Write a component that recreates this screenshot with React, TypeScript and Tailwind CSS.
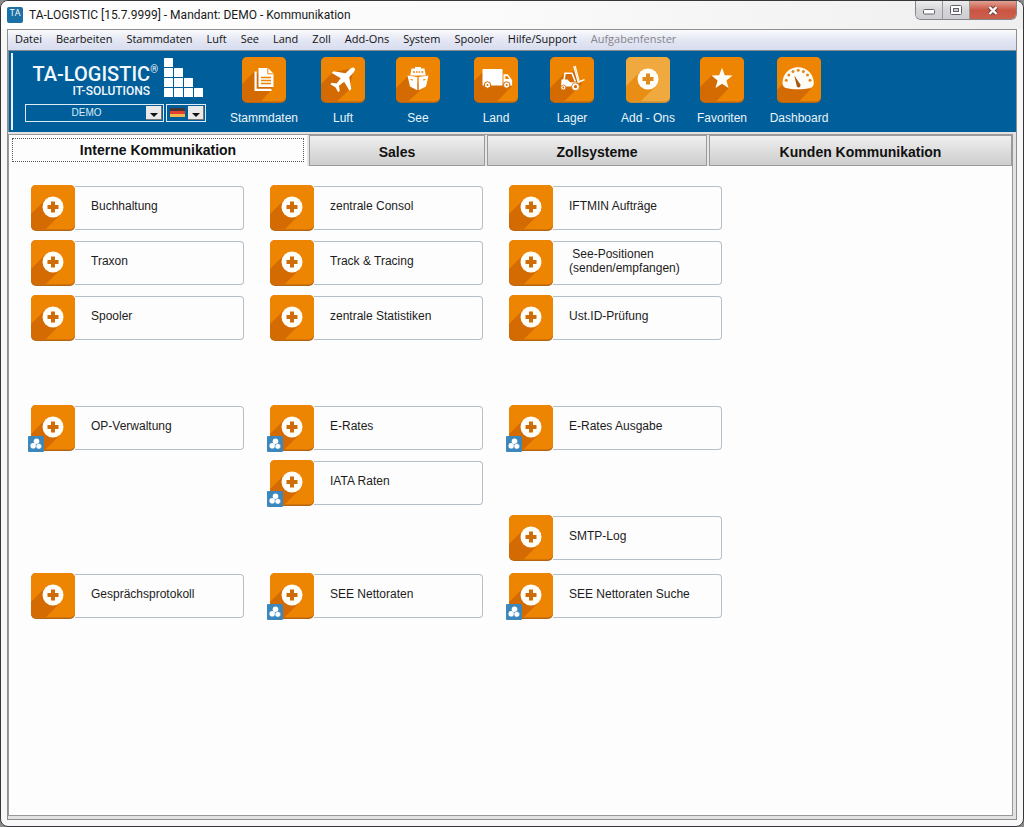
import { useState } from "react";
import type { ReactNode } from "react";
import clsx from "clsx";

type Tile = { label: string; linked?: boolean };

const MENU = [
  "Datei",
  "Bearbeiten",
  "Stammdaten",
  "Luft",
  "See",
  "Land",
  "Zoll",
  "Add-Ons",
  "System",
  "Spooler",
  "Hilfe/Support",
];

const TABS = [
  { label: "Interne Kommunikation", width: "w-[298px]" },
  { label: "Sales", width: "w-[176px]" },
  { label: "Zollsysteme", width: "w-[220px]" },
  { label: "Kunden Kommunikation", width: "flex-1" },
];

// null leaves the cell of the grid empty
const GROUPS: Array<Array<Tile | null>> = [
  [
    { label: "Buchhaltung" },
    { label: "zentrale Consol" },
    { label: "IFTMIN Aufträge" },
    { label: "Traxon" },
    { label: "Track & Tracing" },
    { label: " See-Positionen\n(senden/empfangen)" },
    { label: "Spooler" },
    { label: "zentrale Statistiken" },
    { label: "Ust.ID-Prüfung" },
  ],
  [
    { label: "OP-Verwaltung", linked: true },
    { label: "E-Rates", linked: true },
    { label: "E-Rates Ausgabe", linked: true },
    null,
    { label: "IATA Raten", linked: true },
    null,
    null,
    null,
    { label: "SMTP-Log" },
  ],
  [
    { label: "Gesprächsprotokoll" },
    { label: "SEE Nettoraten", linked: true },
    { label: "SEE Nettoraten Suche", linked: true },
  ],
];

/** Orange square with the long shadow that falls to the lower left. */
function IconTile({ light, shadow, children }: { light?: boolean; shadow: string; children: ReactNode }) {
  return (
    <svg viewBox="0 0 44 46" className="block h-[46px] w-11 shrink-0" aria-hidden="true">
      <rect width="44" height="46" rx="5" fill={light ? "#c98a35" : "#b5650f"} />
      <rect width="44" height="44.5" rx="5" fill={light ? "#efa93f" : "#ee8502"} />
      <path d={shadow} fill={light ? "#e88e14" : "#d36b02"} />
      {children}
    </svg>
  );
}

function PlusIcon({ light }: { light?: boolean }) {
  return (
    <IconTile light={light} shadow="M14.5 14.5 0 29V40Q0 44.5 5 44.5H14.5L29.5 29.5Z">
      <circle cx="22" cy="22" r="10.5" fill="#fffdf8" />
      <path d="M20 16.5h4V20h3.5v4H24v3.5h-4V24h-3.5v-4H20z" fill={light ? "#e08a1c" : "#cf6c0a"} />
    </IconTile>
  );
}

function DocumentIcon() {
  return (
    <IconTile shadow="M13 14 0 27V40Q0 44.5 5 44.5H19L31 31Z">
      <path d="M12.5 14.5h2.2v17.3h14.8V34h-17z" fill="#fff" />
      <path d="M16.5 11h9.5l5.5 5.5V30h-15z" fill="#fff" />
      <path d="M25.8 11v5.8h5.7" fill="none" stroke="#ee8502" strokeWidth="1" />
      <path d="M19 20.5h10M19 23.5h10M19 26.5h10" stroke="#ee8502" strokeWidth="1.3" />
    </IconTile>
  );
}

function PlaneIcon() {
  return (
    <IconTile shadow="M12 15 0 27V40Q0 44.5 5 44.5H16L28 33 33 11Z">
      <path
        transform="translate(22.5 22) rotate(-45)"
        d="M15.5 0C15.5-1.8 13-2.6 11-2.6L5.5-2.6-1.5-12.5-4-12.5-1.5-2.4-8-1.7-11-5.6-13-5.6-11.5 0-13 5.6-11 5.6-8 1.7-1.5 2.4-4 12.5-1.5 12.5 5.5 2.6 11 2.6C13 2.6 15.5 1.8 15.5 0Z"
        fill="#fff"
      />
    </IconTile>
  );
}

function ShipIcon() {
  return (
    <IconTile shadow="M12 19 0 31V40Q0 44.5 5 44.5H12L28 30Z">
      <path d="M19 10h6v1.5h3.5l1.3 7H14.2l1.3-7H19z" fill="#fff" />
      <path d="M17 15h2M20 15h1.6M22.6 15h1.6M25.4 15h2" stroke="#ee8502" strokeWidth="1.6" />
      <path d="M11.5 18.5 21.3 20v13.3L14 29.5ZM32.5 18.5 22.7 20v13.3L30 29.5Z" fill="#fff" />
      <path d="M14.5 22.5 17 23M29.5 22.5 27 23" stroke="#ee8502" strokeWidth="1" />
    </IconTile>
  );
}

function TruckIcon() {
  return (
    <IconTile shadow="M9 15 0 24V40Q0 44.5 5 44.5H23L38 29Z">
      <path d="M9.5 12h18q1 0 1 1v15.5h-20V13q0-1 1-1Z" fill="#fff" />
      <path d="M29.5 17.2h4.2l3.4 4.6 1 1.2v5.5h-8.6z" fill="#fff" />
      <path d="M31.3 19h2l2 3h-4z" fill="#ee8502" />
      <circle cx="13.5" cy="28" r="3.2" fill="#fff" stroke="#d36b02" strokeWidth="1" />
      <circle cx="32.7" cy="28" r="3.2" fill="#fff" stroke="#d36b02" strokeWidth="1" />
      <circle cx="13.5" cy="28" r="1" fill="#d36b02" />
      <circle cx="32.7" cy="28" r="1" fill="#d36b02" />
    </IconTile>
  );
}

function ForkliftIcon() {
  return (
    <IconTile shadow="M14 17 0 31V40Q0 44.5 5 44.5H14L32 27 24 14Z">
      <path d="M14 23.5 15 16.3h7l3.3 8.2" fill="none" stroke="#fff" strokeWidth="1.6" />
      <path d="M11.5 22.5h6l2.5 2.7h6.5v4.3H11z" fill="#fff" />
      <path d="M23.7 9 28.3 26M25.2 9 29.5 25.5" stroke="#fff" strokeWidth="1.1" />
      <path d="M28.5 25 34.5 22.7" stroke="#fff" strokeWidth="1.4" />
      <circle cx="13.3" cy="30.5" r="2.5" fill="#fff" stroke="#d36b02" strokeWidth="0.8" />
      <circle cx="25.5" cy="29.7" r="3.9" fill="#fff" stroke="#d36b02" strokeWidth="0.8" />
      <circle cx="13.3" cy="30.5" r="0.9" fill="#d36b02" />
      <circle cx="25.5" cy="29.7" r="1.6" fill="#d36b02" />
    </IconTile>
  );
}

function StarIcon() {
  return (
    <IconTile shadow="M12 18 0 30V40Q0 44.5 5 44.5H16L29 31Z">
      <path
        d="M22 10.8 24.8 18.3 32.6 18.6 26.4 23.5 28.5 31 22 26.7 15.5 31 17.6 23.5 11.4 18.6 19.2 18.3Z"
        fill="#fffdf8"
      />
    </IconTile>
  );
}

function GaugeIcon() {
  return (
    <IconTile shadow="M6 27 0 33V40Q0 44.5 5 44.5H22L34 32Z">
      <path d="M5.5 26C5.5 17 12.5 10.3 21 10.3S36.8 17 36.8 26C36.8 29 35 30.5 33 31 27 32.8 15 32.8 9 31 7 30.4 5.5 29 5.5 26Z" fill="#fffdf8" />
      <g fill="#e08a1c">
        <circle cx="9.3" cy="23.3" r="1.5" />
        <circle cx="11.8" cy="18" r="1.5" />
        <circle cx="16" cy="14.6" r="1.5" />
        <circle cx="21.2" cy="13.3" r="1.5" />
        <circle cx="26.4" cy="14.6" r="1.5" />
        <circle cx="30.5" cy="18" r="1.5" />
        <circle cx="33" cy="23.3" r="1.5" />
      </g>
      <path d="M17.3 18.5 23.6 27.8Q23.6 30.5 21.6 30.5T19.6 28.5Z" fill="#a45a10" />
    </IconTile>
  );
}

const TOOLS = [
  { label: "Stammdaten", icon: <DocumentIcon />, width: "w-[88px]" },
  { label: "Luft", icon: <PlaneIcon />, width: "w-[70px]" },
  { label: "See", icon: <ShipIcon />, width: "w-[80px]" },
  { label: "Land", icon: <TruckIcon />, width: "w-[76px]" },
  { label: "Lager", icon: <ForkliftIcon />, width: "w-[76px]" },
  { label: "Add - Ons", icon: <PlusIcon light />, width: "w-[76px]" },
  { label: "Favoriten", icon: <StarIcon />, width: "w-[72px]" },
  { label: "Dashboard", icon: <GaugeIcon />, width: "w-[82px]" },
];

function TitleBar() {
  return (
    <header className="flex h-7 items-start justify-between bg-linear-to-r from-white via-[#fafafa] to-[#efefef] pl-1.5">
      <div className="flex h-7 items-center gap-1.5 text-[#1a1a1a]">
        <span className="flex h-4 w-4 justify-center rounded-xs bg-[#1b70a6] font-['Open_Sans',sans-serif] text-[9px] leading-3 text-white">
          TA
        </span>
        <h1 className="font-[Roboto,sans-serif] text-xs">TA-LOGISTIC [15.7.9999] - Mandant: DEMO - Kommunikation</h1>
      </div>
      <div className="mr-1.5 flex h-[19px] overflow-hidden rounded-b-md border border-t-0 border-[#85858a]">
        <button type="button" aria-label="Minimieren" className="flex w-[27px] items-center justify-center border-r border-[#97979c] bg-linear-to-b from-[#ededee] via-[#d5d5d8] to-[#cfcfd3]">
          <svg viewBox="0 0 12 6" className="mt-1 h-1.5 w-3">
            <rect x="0.5" y="0.5" width="11" height="4.5" rx="1" fill="#fff" stroke="#62626c" />
          </svg>
        </button>
        <button type="button" aria-label="Maximieren" className="flex w-[27px] items-center justify-center border-r border-[#97979c] bg-linear-to-b from-[#ededee] via-[#d5d5d8] to-[#cfcfd3]">
          <svg viewBox="0 0 12 10" className="h-2.5 w-3">
            <rect x="0.5" y="0.5" width="11" height="9" rx="1" fill="#fff" stroke="#62626c" />
            <rect x="3.5" y="3.5" width="5" height="3" fill="#ccc" stroke="#62626c" />
          </svg>
        </button>
        <button type="button" aria-label="Schließen" className="flex w-[46px] items-center justify-center bg-linear-to-b from-[#e0a193] via-[#cb5443] to-[#c9614d]">
          <svg viewBox="0 0 12 11" className="h-[11px] w-3">
            <path d="M2.5 2 9.5 9M9.5 2 2.5 9" stroke="#6b3c3c" strokeWidth="4" />
            <path d="M2.5 2 9.5 9M9.5 2 2.5 9" stroke="#fff" strokeWidth="2.4" />
          </svg>
        </button>
      </div>
    </header>
  );
}

function DropArrow() {
  return (
    <span className="pointer-events-none absolute top-0.5 right-0.5 flex h-[14px] w-4 items-center justify-center border-r border-b border-[#777] bg-[#e9e9e9]">
      <svg viewBox="0 0 8 4" className="mt-1 h-1 w-2">
        <path d="M0 0h8L4 4Z" fill="#111" />
      </svg>
    </span>
  );
}

function Brand() {
  return (
    <div className="w-[207px] pt-[7px] pl-3">
      <div className="flex items-end gap-1.5 text-[#f2f8fc]">
        <div className="w-[133px] font-[Roboto,sans-serif] font-medium whitespace-nowrap">
          <p className="flex justify-end text-xl leading-5">
            TA-LOGISTIC
            <span className="text-[10px] leading-3">®</span>
          </p>
          <p className="pr-2 text-right text-xs leading-[14px]">IT-SOLUTIONS</p>
        </div>
        <svg viewBox="0 0 40 40" className="h-10 w-10 shrink-0" fill="#fff" aria-hidden="true">
          {[0, 1, 2, 3].map((col) =>
            [0, 1, 2, 3]
              .filter((row) => row >= col)
              .map((row) => <rect key={`${col}-${row}`} x={col * 10} y={row * 10} width="9" height="9" rx="0.6" />),
          )}
        </svg>
      </div>
      <div className="mt-1.5 flex gap-0.5">
        <div className="relative">
          <select
            aria-label="Mandant"
            defaultValue="DEMO"
            className="block h-[18px] w-[139px] appearance-none border border-[#dcebf5] bg-[#005f9a] pr-4 text-center text-[10px] leading-4 text-[#dcebf5]"
          >
            <option>DEMO</option>
          </select>
          <DropArrow />
        </div>
        <div className="relative">
          <select
            aria-label="Sprache"
            defaultValue="de"
            className="block h-[18px] w-10 appearance-none border border-[#dcebf5] bg-[#005f9a]"
          >
            <option value="de" />
          </select>
          <svg viewBox="0 0 15 9" className="pointer-events-none absolute top-1 left-1 h-[9px] w-[15px]" aria-hidden="true">
            <rect width="15" height="3" fill="#4a3434" />
            <rect y="3" width="15" height="3" fill="#e0402e" />
            <rect y="6" width="15" height="3" fill="#f2b64c" />
          </svg>
          <DropArrow />
        </div>
      </div>
    </div>
  );
}

function ModuleTile({ tile }: { tile: Tile }) {
  return (
    <button type="button" className="relative flex h-[46px] w-full text-left">
      <PlusIcon />
      {tile.linked && (
        <svg viewBox="0 0 16 16" className="absolute -bottom-px -left-[3px] h-4 w-4" aria-hidden="true">
          <rect width="16" height="16" rx="1" fill="#3c87bb" />
          <circle cx="8.5" cy="5.3" r="2.8" fill="#fff" />
          <circle cx="5.2" cy="9.8" r="2.8" fill="#fff" />
          <circle cx="10.8" cy="10.3" r="2.8" fill="#fff" stroke="#3c87bb" strokeWidth="0.5" />
        </svg>
      )}
      <span className="mt-px flex h-11 flex-1 items-center rounded-r-sm border border-l-0 border-[#b4bfc8] pb-1 pl-4 text-xs leading-[14px] whitespace-pre text-[#1c1c1c]">
        {tile.label}
      </span>
    </button>
  );
}

export default function App() {
  const [active, setActive] = useState(0);

  return (
    <div className="flex min-h-screen bg-[#8b8b8b] font-['Liberation_Sans',Arial,sans-serif]">
      <div className="flex flex-1 flex-col overflow-hidden rounded-lg border border-[#38363a] bg-[#f8f8f8]">
        <TitleBar />
        <div className="mx-1.5 mb-1.5 flex flex-1 flex-col border border-[#8e8e8e] bg-[#e2e2e4]">
          <nav className="flex h-5 items-center gap-3.5 bg-linear-to-b from-[#fbfbfd] via-[#e4e7f4] to-[#d7dcee] pb-0.5 pl-[7px] font-['Open_Sans',sans-serif] text-[11px] text-[#111]">
            {MENU.map((m) => (
              <button key={m} type="button">
                {m}
              </button>
            ))}
            <button type="button" disabled className="text-[#85858a]">
              Aufgabenfenster
            </button>
          </nav>

          <div className="flex h-[82px] border-t border-l border-[#7f8a92] bg-[#005f9a]">
            <div className="my-0.5 ml-0.5 w-0.5 bg-[#e8f2f8]" />
            <Brand />
            <div className="flex pt-1.5">
              {TOOLS.map((t) => (
                <button
                  key={t.label}
                  type="button"
                  className={clsx("flex flex-col items-center gap-[7px] text-xs leading-4 whitespace-nowrap text-[#eaf4fa]", t.width)}
                >
                  {t.icon}
                  {t.label}
                </button>
              ))}
            </div>
          </div>

          <div className="mt-0.5 mr-[3px] mb-[3px] flex flex-1 flex-col border border-[#999] bg-[#fdfdfd]">
            <div role="tablist" className="flex h-[31px] gap-0.5 bg-[#e6e6e6]">
              {TABS.map((tab, i) => (
                <button
                  key={tab.label}
                  type="button"
                  role="tab"
                  aria-selected={i === active}
                  onClick={() => setActive(i)}
                  className={clsx(
                    "text-sm font-bold text-[#111]",
                    tab.width,
                    i === active
                      ? "bg-[#fdfdfd] px-[3px] pt-[3px] pb-1"
                      : "border border-[#9a9a9a] bg-linear-to-b from-[#f0f0f0] via-[#dedede] to-[#cecece] pt-0.5",
                  )}
                >
                  <span className={clsx("flex items-center justify-center", i === active && "h-6 border border-dotted border-[#555]")}>
                    {tab.label}
                  </span>
                </button>
              ))}
            </div>

            <main className="px-[22px] pt-[19px]">
              {GROUPS.map((group, g) => (
                <div
                  key={g}
                  className={clsx("grid grid-cols-[repeat(3,213px)] gap-x-[26px] gap-y-[9px]", g === 1 && "mt-16", g === 2 && "mt-3")}
                >
                  {group.map((tile, i) => (tile ? <ModuleTile key={tile.label} tile={tile} /> : <div key={i} />))}
                </div>
              ))}
            </main>
          </div>
        </div>
      </div>
    </div>
  );
}
